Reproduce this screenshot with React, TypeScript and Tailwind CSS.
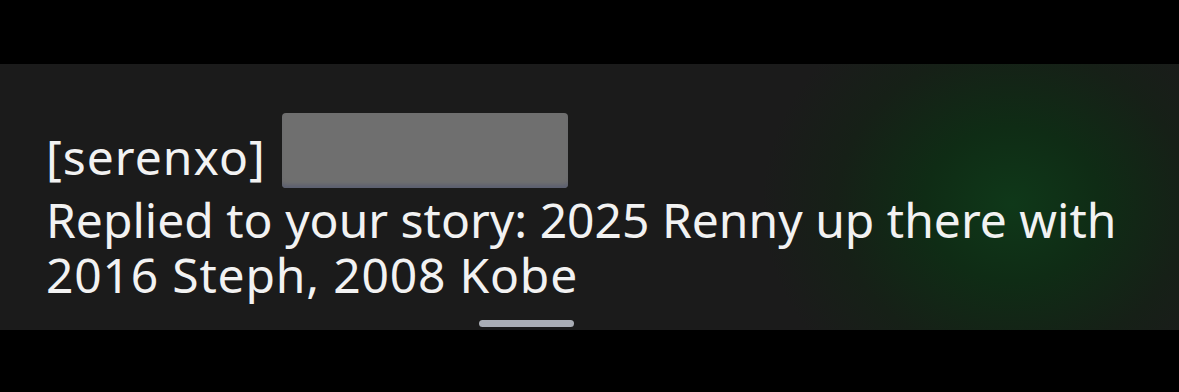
export default function App() {
  return (
    <div className="w-[1179px] h-[392px] bg-black flex flex-col" style={{ fontFamily: '"Noto Sans", "Liberation Sans", sans-serif' }}>
      <div className="h-[64px] bg-black" />
      <div className="h-[266px] bg-[#1b1b1b] bg-[radial-gradient(ellipse_250px_220px_at_1012px_140px,#0f3819_0%,#0f2c15_35%,#162017_70%,#1b1b1b_100%)] flex flex-col">
        <div className="pl-[46px] pt-[49px] flex items-end">
          <span className="mb-[3px] text-[48px] leading-[56px] tracking-[1px] text-[#f2f2f2]">[serenxo]</span>
          <div className="ml-[16px] w-[286px] h-[75px] rounded-[4px] bg-[#6f6f6f] shadow-[inset_0_-6px_4px_-3px_#5a5e70]" />
        </div>
        <p className="mt-[4px] pl-[46px] text-[48px] leading-[55px] text-[#f2f2f2]">
          Replied to your story: 2025 Renny up there with
          <br />
          <span className="tracking-[0.8px]">2016 Steph, 2008 Kobe</span>
        </p>
        <div className="mt-auto mb-[3px] ml-[479px] w-[95px] h-[7px] rounded-full bg-[#a9adb5]" />
      </div>
      <div className="flex-1 bg-black" />
    </div>
  );
}
